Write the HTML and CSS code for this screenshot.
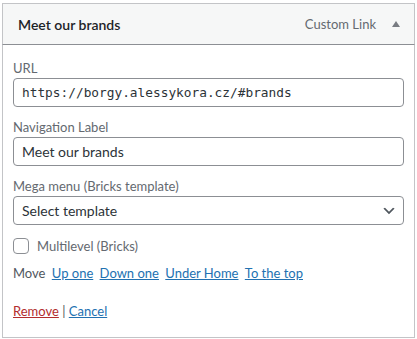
FILE: index.html
```html
<!DOCTYPE html>
<html lang="en">
<head>
    <meta charset="UTF-8">
    <meta name="viewport" content="width=device-width, initial-scale=1.0">
    <title>Menu item</title>
    <link rel="stylesheet" href="styles.css">
</head>
<body>

    <div class="menu-item">
        <div class="item-handle">
            <span class="item-title">Meet our brands</span>
            <span class="item-controls">
                <span class="item-type">Custom Link</span>
                <span class="item-toggle"></span>
            </span>
        </div>

        <div class="item-settings">
            <div class="field">
                <label for="edit-url">URL</label>
                <input type="text" id="edit-url" class="code" value="https://borgy.alessykora.cz/#brands">
            </div>
            <div class="field">
                <label for="edit-label">Navigation Label</label>
                <input type="text" id="edit-label" value="Meet our brands">
            </div>
            <div class="field">
                <label for="edit-mega">Mega menu (Bricks template)</label>
                <select id="edit-mega">
                    <option>Select template</option>
                </select>
            </div>
            <div class="check-row">
                <input type="checkbox" id="edit-multilevel">
                <label for="edit-multilevel">Multilevel (Bricks)</label>
            </div>
            <div class="move-row">
                Move
                <a href="#">Up one</a>
                <a href="#">Down one</a>
                <a href="#">Under Home</a>
                <a href="#">To the top</a>
            </div>
            <div class="actions">
                <a href="#" class="remove">Remove</a> <span class="sep">|</span> <a href="#">Cancel</a>
            </div>
        </div>
    </div>

</body>
</html>
```

FILE: styles.css
```css
body {
    margin: 0;
    background: #fff;
    font-family: Lato, "Noto Sans", sans-serif;
    color: #3c434a;
}

.menu-item {
    margin: 3px 2px 0 2px;
    width: 413px;
    box-sizing: border-box;
}

.item-handle {
    display: flex;
    justify-content: space-between;
    align-items: center;
    height: 42px;
    box-sizing: border-box;
    padding: 0 14px 0 15px;
    background: #f6f7f7;
    border: 1px solid #c3c4c7;
    border-bottom-color: #8c8f94;
}

.item-title {
    font-size: 14px;
    font-weight: 600;
    color: #1d2327;
}

.item-controls {
    display: flex;
    align-items: center;
}

.item-type {
    font-size: 13px;
    color: #646970;
}

.item-toggle {
    width: 0;
    height: 0;
    margin-left: 16px;
    border-left: 4px solid transparent;
    border-right: 4px solid transparent;
    border-bottom: 6px solid #787c82;
}

.item-settings {
    border: 1px solid #c3c4c7;
    border-top: none;
    padding: 14px 10px 16px 10px;
}

.field {
    margin-bottom: 11px;
}

.field label {
    display: block;
    font-size: 13px;
    line-height: 18px;
    color: #646970;
    margin-bottom: 1px;
}

.field input,
.field select {
    display: block;
    width: 100%;
    height: 29px;
    box-sizing: border-box;
    border: 1px solid #8c8f94;
    border-radius: 4px;
    padding: 0 8px;
    font-family: Lato, "Noto Sans", sans-serif;
    font-size: 14px;
    color: #2c3338;
    background: #fff;
    margin: 0;
}

.field input.code {
    font-family: "DejaVu Sans Mono", "Liberation Mono", monospace;
    font-size: 12.8px;
}

.field select {
    -webkit-appearance: none;
    appearance: none;
    background: #fff url('data:image/svg+xml;utf8,<svg xmlns="http://www.w3.org/2000/svg" width="20" height="20" viewBox="0 0 20 20"><path d="M5 6l5 5 5-5 2 1-7 7-7-7z" fill="%2350575e"/></svg>') no-repeat right 6px top 55%;
    background-size: 16px 16px;
    padding-right: 24px;
}

.check-row {
    display: flex;
    align-items: center;
    margin-top: 13px;
    height: 16px;
}

.check-row input {
    -webkit-appearance: none;
    appearance: none;
    width: 16px;
    height: 16px;
    margin: 0 8px 0 0;
    border: 1px solid #8c8f94;
    border-radius: 4px;
    background: #fff;
}

.check-row label {
    font-size: 13px;
    color: #646970;
}

.move-row {
    margin-top: 9px;
    font-size: 13px;
    line-height: 20px;
    color: #50575e;
}

.move-row a {
    margin-left: 3px;
}

a {
    color: #2271b1;
    text-decoration: underline;
}

.actions {
    margin-top: 18px;
    font-size: 13px;
    line-height: 20px;
}

.actions .remove {
    color: #b32d2e;
}

.sep {
    color: #50575e;
}
```
